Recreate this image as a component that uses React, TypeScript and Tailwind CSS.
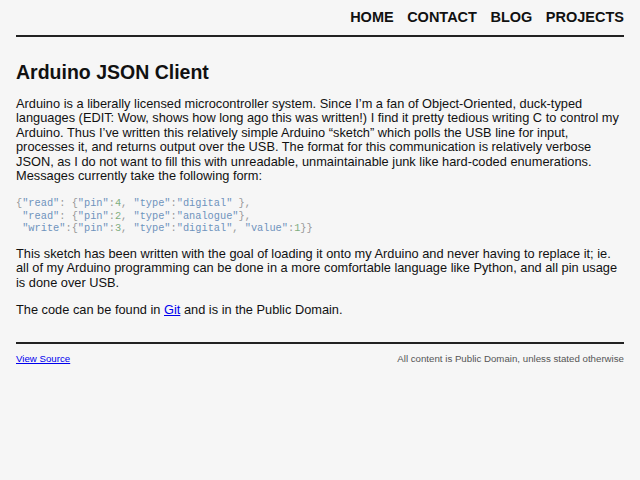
import React from "react";

const Str = ({ children }: { children: React.ReactNode }) => (
  <span className="text-[#6f93bd]">{children}</span>
);
const Num = ({ children }: { children: React.ReactNode }) => (
  <span className="text-[#7fae7f]">{children}</span>
);

const App = () => {
  return (
    <div className="min-h-[480px] bg-[#f6f6f6] px-4 font-['Liberation_Sans',Arial,sans-serif] text-[#111]">
      <div className="flex flex-row justify-end gap-[13.5px] border-b-2 border-[#222] pt-[9px] pb-[9px] text-[14.5px] leading-[17px] font-bold">
        <p>HOME</p>
        <p>CONTACT</p>
        <p>BLOG</p>
        <p>PROJECTS</p>
      </div>

      <h1 className="mt-[24px] text-[19.5px] leading-[22px] font-bold">
        Arduino JSON Client
      </h1>

      <p className="mt-[14px] text-[12.8px] leading-[14.4px]">
        Arduino is a liberally licensed microcontroller system. Since I’m a fan
        of Object-Oriented, duck-typed languages (EDIT: Wow, shows how long ago
        this was written!) I find it pretty tedious writing C to control my
        Arduino. Thus I’ve written this relatively simple Arduino “sketch” which
        polls the USB line for input, processes it, and returns output over the
        USB. The format for this communication is relatively verbose JSON, as I
        do not want to fill this with unreadable, unmaintainable junk like
        hard-coded enumerations. Messages currently take the following form:
      </p>

      <pre className="mt-[14px] font-['Liberation_Mono','Courier_New',monospace] text-[10.3px] leading-[12.5px] text-[#999]">
        {"{"}
        <Str>"read"</Str>: {"{"}
        <Str>"pin"</Str>:<Num>4</Num>, <Str>"type"</Str>:<Str>"digital"</Str>{" },\n "}
        <Str>"read"</Str>: {"{"}
        <Str>"pin"</Str>:<Num>2</Num>, <Str>"type"</Str>:<Str>"analogue"</Str>{"},\n "}
        <Str>"write"</Str>:{"{"}
        <Str>"pin"</Str>:<Num>3</Num>, <Str>"type"</Str>:<Str>"digital"</Str>, <Str>"value"</Str>:<Num>1</Num>{"}}"}
      </pre>

      <p className="mt-[12px] text-[12.8px] leading-[14.4px]">
        This sketch has been written with the goal of loading it onto my Arduino
        and never having to replace it; ie. all of my Arduino programming can be
        done in a more comfortable language like Python, and all pin usage is
        done over USB.
      </p>

      <p className="mt-[12.5px] text-[12.8px] leading-[14.4px]">
        The code can be found in{" "}
        <a href="#" className="text-[#0000ee] underline">
          Git
        </a>{" "}
        and is in the Public Domain.
      </p>

      <div className="mt-[25px] border-t-2 border-[#222]" />

      <div className="flex flex-row justify-between pt-[9px] text-[9.7px] leading-[12px]">
        <a href="#" className="text-[#0000ee] underline">
          View Source
        </a>
        <p className="text-[#555]">
          All content is Public Domain, unless stated otherwise
        </p>
      </div>
    </div>
  );
};

export default App;
